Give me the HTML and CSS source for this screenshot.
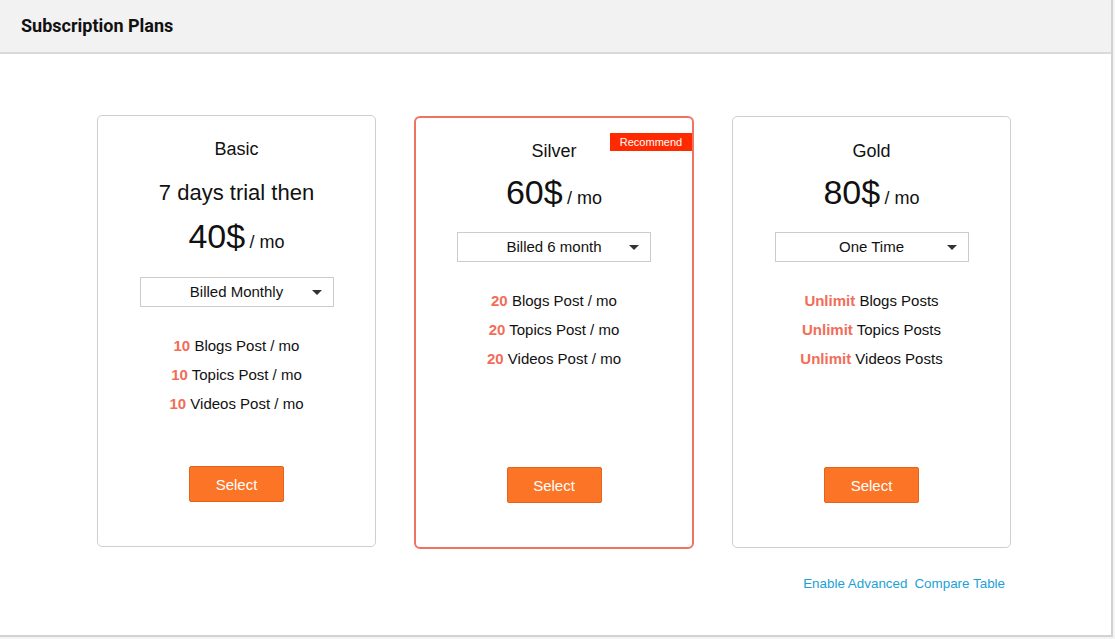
FILE: index.html
```html
<!DOCTYPE html>
<html>
<head>
<meta charset="utf-8">
<link rel="stylesheet" href="styles.css">
</head>
<body>
<div class="panel">
  <div class="panel-header">Subscription Plans</div>
  <div class="panel-body">
    <div class="plans">
      <div class="card card-trial">
        <div class="plan-name">Basic</div>
        <div class="trial">7 days trial then</div>
        <div class="price"><span class="amount">40$</span> <span class="per">/ mo</span></div>
        <div class="dropdown">Billed Monthly<span class="caret"></span></div>
        <ul class="features">
          <li><b>10</b> Blogs Post / mo</li>
          <li><b>10</b> Topics Post / mo</li>
          <li><b>10</b> Videos Post / mo</li>
        </ul>
        <button class="select-btn">Select</button>
      </div>
      <div class="card card-featured">
        <div class="badge">Recommend</div>
        <div class="plan-name">Silver</div>
        <div class="price"><span class="amount">60$</span> <span class="per">/ mo</span></div>
        <div class="dropdown">Billed 6 month<span class="caret"></span></div>
        <ul class="features">
          <li><b>20</b> Blogs Post / mo</li>
          <li><b>20</b> Topics Post / mo</li>
          <li><b>20</b> Videos Post / mo</li>
        </ul>
        <button class="select-btn">Select</button>
      </div>
      <div class="card card-lower">
        <div class="plan-name">Gold</div>
        <div class="price"><span class="amount">80$</span> <span class="per">/ mo</span></div>
        <div class="dropdown">One Time<span class="caret"></span></div>
        <ul class="features">
          <li><b>Unlimit</b> Blogs Posts</li>
          <li><b>Unlimit</b> Topics Posts</li>
          <li><b>Unlimit</b> Videos Posts</li>
        </ul>
        <button class="select-btn">Select</button>
      </div>
    </div>
    <div class="links">
      <a href="#">Enable Advanced</a>
      <a href="#">Compare Table</a>
    </div>
  </div>
</div>
</body>
</html>
```

FILE: styles.css
```css
* { box-sizing: border-box; }
html, body { margin: 0; padding: 0; background: #f4f4f4; }
body { font-family: "Liberation Sans", Arial, sans-serif; color: #111; }

.panel {
  width: 1113px;
  height: 637px;
  background: #fff;
  border-right: 2px solid #d2d2d2;
  border-bottom: 2px solid #d2d2d2;
  display: flex;
  flex-direction: column;
}

.panel-header {
  height: 54px;
  background: #f2f2f2;
  border-bottom: 2px solid #dadada;
  padding-left: 21px;
  font-family: Roboto, "Liberation Sans", sans-serif;
  font-weight: 700;
  font-size: 18px;
  line-height: 51px;
  color: #111;
}

.panel-body {
  flex: 1;
  padding-top: 61px;
  padding-right: 3px;
  display: flex;
  flex-direction: column;
  align-items: center;
}

.plans {
  display: flex;
  gap: 38px;
  align-items: flex-start;
}

.card {
  position: relative;
  width: 279px;
  height: 432px;
  border: 1px solid #cfcfcf;
  border-radius: 5px;
  padding: 22px 0 44px;
  display: flex;
  flex-direction: column;
  align-items: center;
  text-align: center;
}

.card-lower { margin-top: 1px; }

.card-featured {
  width: 280px;
  height: 433px;
  margin-top: 1px;
  border: 2px solid #f07360;
  border-radius: 6px;
}

.badge {
  position: absolute;
  top: 15px;
  right: 0;
  width: 82px;
  height: 18px;
  background: #ff2a00;
  color: #fff;
  font-size: 11px;
  line-height: 18px;
  text-align: center;
}

.plan-name {
  font-size: 18px;
  line-height: 22px;
}

.card-lower .plan-name { margin-top: 1px; }

.trial {
  margin-top: 11px;
  font-size: 22px;
  line-height: 44px;
}

.price {
  margin-top: 9px;
  line-height: 42px;
  height: 42px;
}
.trial + .price { margin-top: 0; }

.amount { font-size: 34px; }
.per { font-size: 18px; }

.dropdown {
  position: relative;
  margin-top: 19px;
  width: 194px;
  height: 30px;
  border: 1px solid #cccccc;
  font-size: 15px;
  line-height: 28px;
  text-align: center;
  color: #111;
}
.card-trial .dropdown { margin-top: 20px; }

.caret {
  position: absolute;
  right: 11px;
  top: 12px;
  width: 0;
  height: 0;
  border-left: 5px solid transparent;
  border-right: 5px solid transparent;
  border-top: 5px solid #333;
}

.features {
  list-style: none;
  margin: 24px 0 0;
  padding: 0;
  font-size: 15px;
  line-height: 29px;
}
.features b { color: #f26d58; }

.select-btn {
  margin-top: auto;
  width: 95px;
  height: 36px;
  background: #fc7425;
  border: 1px solid #e3621c;
  border-radius: 2px;
  color: #fff;
  font-family: "Liberation Sans", Arial, sans-serif;
  font-size: 15px;
  padding: 0;
}

.links {
  align-self: flex-end;
  margin-right: 103px;
  margin-top: 27px;
  font-size: 13.4px;
  display: flex;
  gap: 7px;
}
.links a { color: #1ba1d6; text-decoration: none; }
```
